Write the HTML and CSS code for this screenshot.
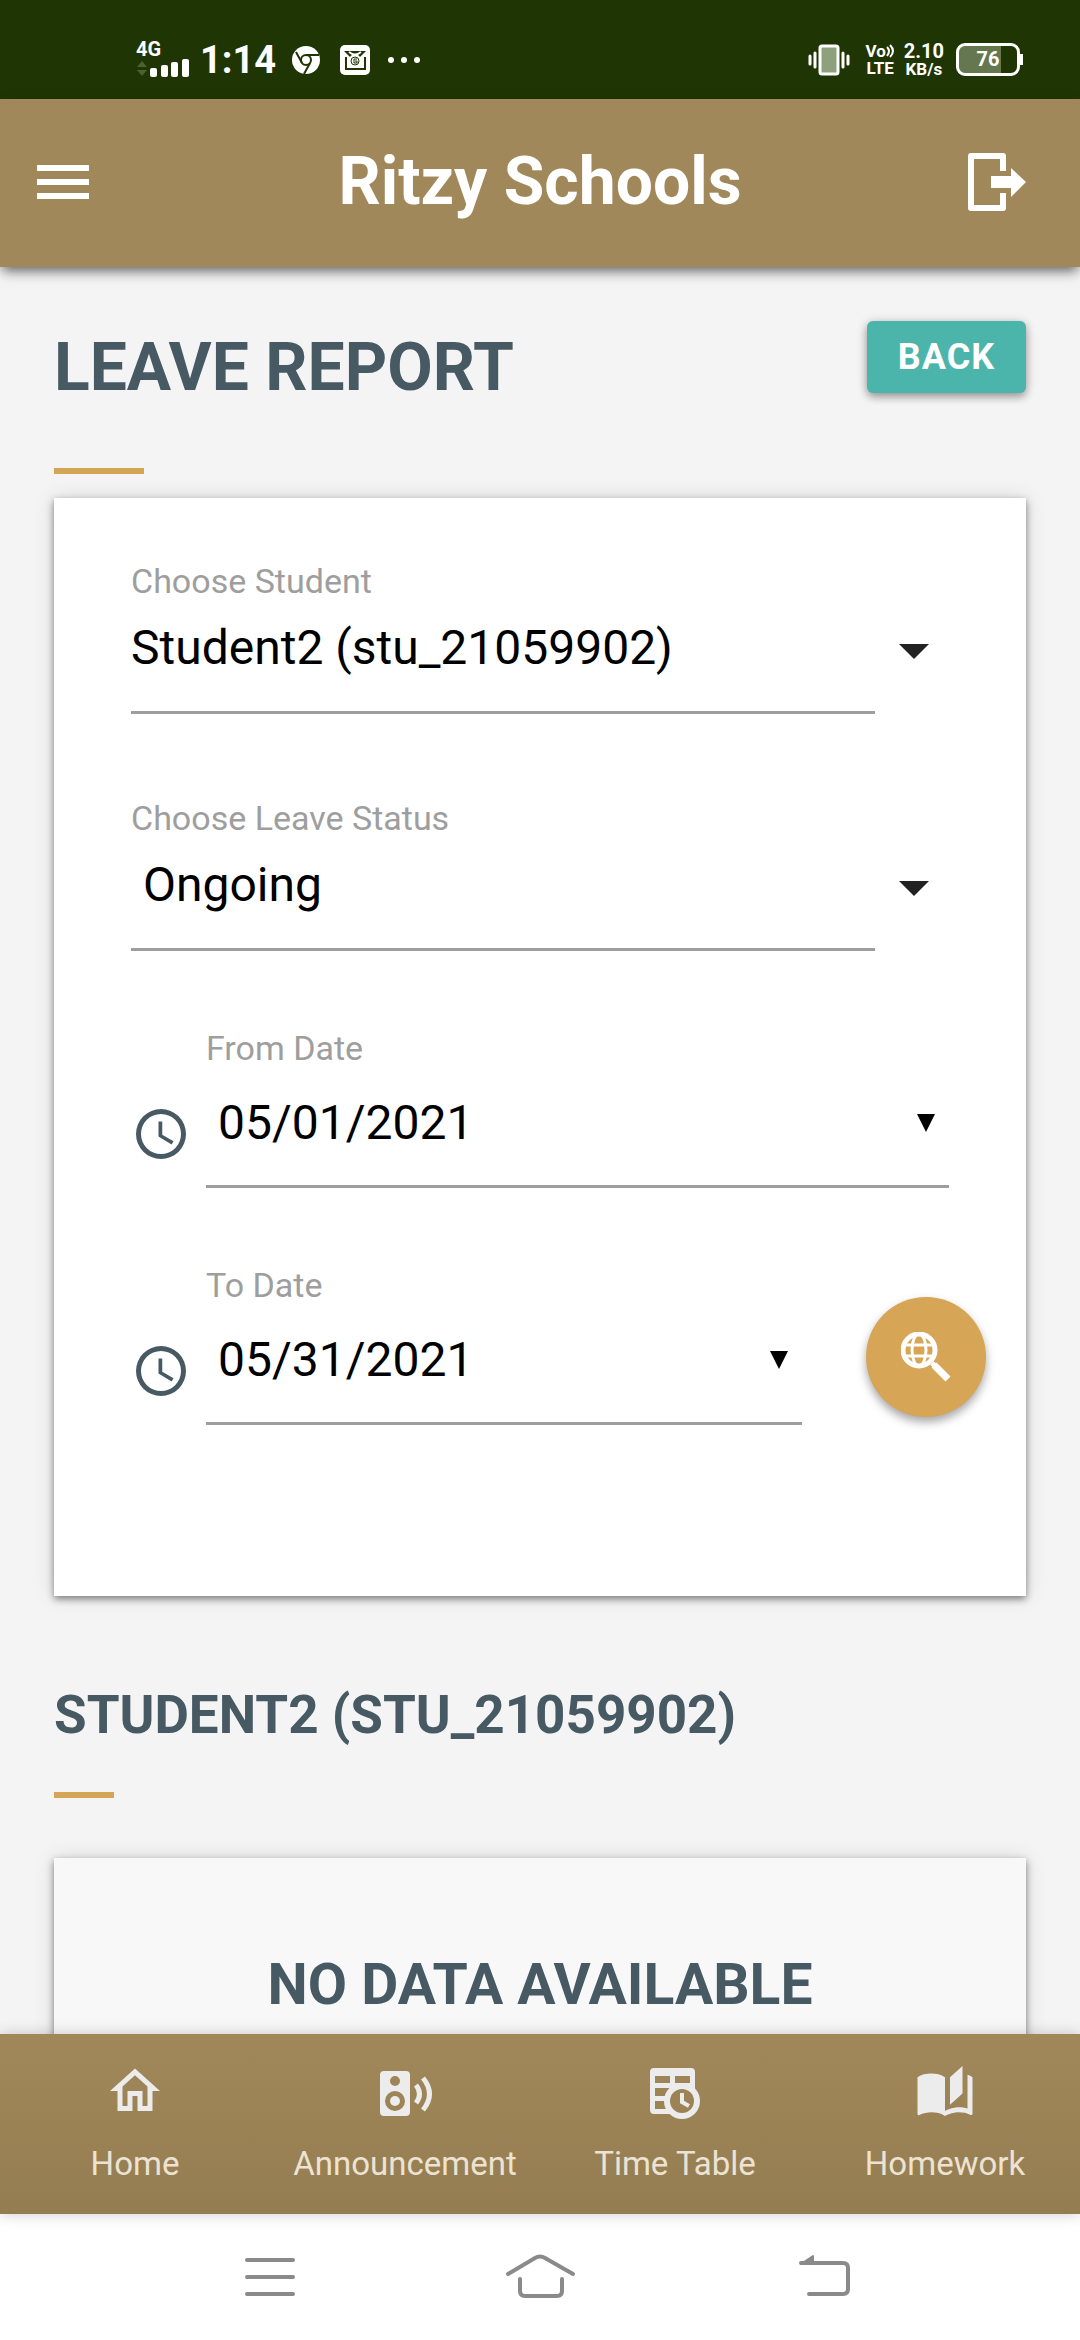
FILE: index.html
```html
<!DOCTYPE html>
<html lang="en">

<head>
    <meta charset="utf-8">
    <meta name="viewport" content="width=device-width">
    <title>Ritzy Schools</title>
    <link rel="stylesheet" href="styles.css">
</head>

<body>
    <div class="statusBar">
        <div class="statusLeft">
            <div class="signal">
                <span class="netType">4G</span>
                <svg width="54" height="22" viewBox="0 0 54 22">
                    <path d="M1 9L6 3l5 6zM1 12h10l-5 6z" fill="#4a6332" />
                    <g fill="#fff">
                        <rect x="14" y="10" width="7" height="9" rx="2" />
                        <rect x="25" y="7" width="7" height="12" rx="2" />
                        <rect x="35" y="4" width="7" height="15" rx="2" />
                        <rect x="46" y="1" width="7" height="18" rx="2" />
                    </g>
                </svg>
            </div>
            <span class="time">1:14</span>
            <svg class="chrome" width="28" height="28" viewBox="0 0 28 28">
                <circle cx="14" cy="14" r="14" fill="#fff" />
                <g fill="none" stroke="#1f3604" stroke-width="2">
                    <circle cx="14" cy="14" r="5" />
                    <path d="M14 9h13M10 17L4 6M18 17l-6 11" />
                </g>
            </svg>
            <svg class="mail" width="30" height="30" viewBox="0 0 30 30">
                <rect width="30" height="30" rx="5" fill="#fff" />
                <path d="M4 6h22l-6 6a6 6 0 0 0-10 0z" fill="#1f3604" />
                <path d="M9 7q6 5 12 0" fill="none" stroke="#fff" stroke-width="2" />
                <path d="M6 12v12h19V12" fill="none" stroke="#1f3604" stroke-width="2" />
                <circle cx="15" cy="16" r="4" fill="none" stroke="#1f3604" stroke-width="1" />
                <path d="M17 14h-3v4h3v-2h-2" fill="none" stroke="#1f3604" stroke-width="1" />
            </svg>
            <svg width="34" height="8" viewBox="0 0 34 8" fill="#fff">
                <circle cx="4" cy="4" r="3" />
                <circle cx="17" cy="4" r="3" />
                <circle cx="30" cy="4" r="3" />
            </svg>
        </div>
        <div class="statusRight">
            <svg width="42" height="32" viewBox="0 0 42 32">
                <rect x="12" y="2" width="18" height="28" rx="2" fill="#8fa07c" stroke="#fff" stroke-width="3" />
                <path d="M7 9v14M35 9v14M2 12v8M40 12v8" stroke="#fff" stroke-width="3" stroke-linecap="round" />
            </svg>
            <div class="twoLine volte">
                <span class="vo">Vo<svg width="9" height="14" viewBox="0 0 9 14">
                        <path d="M1 3q4 4 0 9M4 1q6 6 0 12" fill="none" stroke="#fff" stroke-width="2" />
                    </svg></span>
                <span>LTE</span>
            </div>
            <div class="twoLine speed">
                <span class="num">2.10</span>
                <span>KB/s</span>
            </div>
            <div class="battery"><span class="batteryText">76</span></div>
        </div>
    </div>

    <header class="topBar">
        <button class="iconBtn menuBtn" aria-label="Menu">
            <svg width="52" height="34" viewBox="0 0 52 34" fill="#fff">
                <path d="M0 0h52v6H0zM0 14h52v6H0zM0 28h52v6H0z" />
            </svg>
        </button>
        <div class="brand">Ritzy Schools</div>
        <button class="iconBtn logoutBtn" aria-label="Logout">
            <svg width="58" height="58" viewBox="0 0 58 58">
                <path d="M35 18V3H3v52h32V40" fill="none" stroke="#fff" stroke-width="6" stroke-linejoin="round" />
                <path d="M23 23h20v-8l15 14-15 15v-9H23z" fill="#fff" />
            </svg>
        </button>
    </header>

    <main>
        <div class="titleRow">
            <h1>Leave Report</h1>
            <button class="back">BACK</button>
        </div>
        <div class="bar"></div>

        <form class="card filters">
            <div class="field">
                <label for="student">Choose Student</label>
                <div class="selectRow">
                    <select id="student">
                        <option>Student2 (stu_21059902)</option>
                    </select>
                    <svg width="30" height="15" viewBox="0 0 30 15"><path d="M0 0h30L15 15z" fill="#222" /></svg>
                </div>
            </div>
            <div class="field">
                <label for="status">Choose Leave Status</label>
                <div class="selectRow">
                    <select id="status" class="indent">
                        <option>Ongoing</option>
                    </select>
                    <svg width="30" height="15" viewBox="0 0 30 15"><path d="M0 0h30L15 15z" fill="#222" /></svg>
                </div>
            </div>
            <div class="dateRow">
                <svg class="clock" width="60" height="60" viewBox="0 0 24 24">
                    <path d="M12 2a10 10 0 1 0 0 20 10 10 0 0 0 0-20zm0 18a8 8 0 1 1 0-16 8 8 0 0 1 0 16zM12.500 7H11v6l5.250 3.150.75-1.230-4.500-2.670z" />
                </svg>
                <div class="dateField">
                    <label for="from">From Date</label>
                    <div class="dateBox">
                        <input type="text" id="from" value="05/01/2021">
                        <svg width="18" height="18" viewBox="0 0 18 18"><path d="M0 0h18L9 18z" /></svg>
                    </div>
                </div>
            </div>
            <div class="dateRow">
                <svg class="clock" width="60" height="60" viewBox="0 0 24 24">
                    <path d="M12 2a10 10 0 1 0 0 20 10 10 0 0 0 0-20zm0 18a8 8 0 1 1 0-16 8 8 0 0 1 0 16zM12.500 7H11v6l5.250 3.150.75-1.230-4.500-2.670z" />
                </svg>
                <div class="dateField">
                    <label for="to">To Date</label>
                    <div class="dateBox">
                        <input type="text" id="to" value="05/31/2021">
                        <svg width="18" height="18" viewBox="0 0 18 18"><path d="M0 0h18L9 18z" /></svg>
                    </div>
                </div>
                <button type="button" class="search" aria-label="Search">
                    <svg width="50" height="50" viewBox="0 0 50 50" fill="none" stroke="#fff">
                        <circle cx="18" cy="18" r="16" stroke-width="5" />
                        <ellipse cx="18" cy="18" rx="7" ry="16" stroke-width="3" />
                        <path d="M3 13h30M3 24h30" stroke-width="3" />
                        <path d="M31 31l3 3" stroke-width="5" />
                        <path d="M33 33l14 14" stroke-width="7" />
                    </svg>
                </button>
            </div>
        </form>

        <h2>Student2 (stu_21059902)</h2>
        <div class="bar short"></div>
        <div class="card empty">
            <h3>No Data Available</h3>
        </div>
    </main>

    <nav class="tabs">
        <a href="#home">
            <svg width="60" height="60" viewBox="0 0 24 24">
                <path d="M12 5.690L17 10.190V18h-2v-6H9v6H7v-7.810zM12 3L2 12h3v8h6v-6h2v6h6v-8h3z" />
            </svg>
            Home
        </a>
        <a href="#announcement">
            <svg width="60" height="60" viewBox="0 0 60 60">
                <path fill-rule="evenodd" d="M9 10h22a4 4 0 0 1 4 4v37a4 4 0 0 1-4 4H9a4 4 0 0 1-4-4V14a4 4 0 0 1 4-4zM20 15a5 5 0 1 0 0 10 5 5 0 0 0 0-10zM20 30a10 10 0 1 0 0 20 10 10 0 0 0 0-20z" />
                <circle cx="20" cy="40" r="5" />
                <path d="M41 24q7 9 0 18M48 17q13 16 0 32" fill="none" stroke="#ececec" stroke-width="5" />
            </svg>
            Announcement
        </a>
        <a href="#timetable">
            <svg width="60" height="60" viewBox="0 0 60 60">
                <path fill-rule="evenodd" d="M9 7h37a4 4 0 0 1 4 4v29L37 53H9a4 4 0 0 1-4-4V11a4 4 0 0 1 4-4zM10 15v7h15v-7zM30 15v7h15v-7zM10 27v8h15v-8zM10 40v8h15v-8z" />
                <circle cx="37" cy="40" r="18" />
                <circle cx="37" cy="40" r="12" fill="#9b8356" />
                <path d="M37 32v9l7 4" fill="none" stroke="#ececec" stroke-width="4" />
            </svg>
            Time Table
        </a>
        <a href="#homework">
            <svg width="60" height="60" viewBox="0 0 24 24">
                <path d="M19 2l-5 4.500v11l5-4.500zM6.500 5C4.550 5 2.450 5.400 1 6.500v14.660c0 .250.250.500.500.500.100 0 .150-.070.250-.070 1.350-.650 3.300-1.090 4.750-1.090 1.950 0 4.050.400 5.500 1.500 1.350-.850 3.800-1.500 5.500-1.500 1.650 0 3.350.310 4.750 1.060.100.050.150.030.250.030.250 0 .500-.250.500-.500V6.500c-.600-.450-1.250-.750-2-1V19c-1.100-.350-2.300-.500-3.500-.500-1.700 0-4.150.650-5.500 1.500V6.500C10.550 5.400 8.450 5 6.500 5z" />
            </svg>
            Homework
        </a>
    </nav>

    <div class="systemNav">
        <button class="iconBtn" aria-label="Recent apps">
            <svg width="100" height="50" viewBox="0 0 100 50"><path d="M31 8h46M31 25h46M31 42h46" /></svg>
        </button>
        <button class="iconBtn" aria-label="Home screen">
            <svg width="100" height="50" viewBox="0 0 100 50"><path d="M18 22L45 6q5-3 10 0l28 16M30 27v12q0 5 5 5h32q5 0 5-5V27" /></svg>
        </button>
        <button class="iconBtn" aria-label="Go back">
            <svg width="100" height="50" viewBox="0 0 100 50">
                <path d="M37 11h42q5 0 5 5v21q0 5-5 5H45" />
                <path class="solid" d="M37 12l12-8v8z" />
            </svg>
        </button>
    </div>
</body>

</html>
```
FILE: styles.css
```css
* {
    box-sizing: border-box;
}

body {
    margin: 0;
    height: 100vh;
    display: flex;
    flex-direction: column;
    background-color: #f4f4f4;
    font-family: Roboto, "Liberation Sans", sans-serif;
}

svg {
    display: block;
    flex: none;
}

button {
    border: 0;
    padding: 0;
    font-family: inherit;
    cursor: pointer;
}

h1, h2, h3 {
    margin: 0;
    color: #475a64;
    text-transform: uppercase;
}

/* Phone status bar */

.statusBar {
    flex: none;
    height: 99px;
    padding: 20px 60px 0 136px;
    display: flex;
    justify-content: space-between;
    align-items: center;
    background-color: #1f3604;
    color: #fff;
    font-weight: bold;
}

.statusLeft, .statusRight {
    display: flex;
    align-items: center;
}

.signal {
    width: 54px;
    margin-right: 10px;
}

.netType {
    display: block;
    font-size: 20px;
    line-height: 18px;
}

.time {
    font-size: 38px;
    line-height: 40px;
    margin-right: 16px;
}

.chrome {
    margin-right: 20px;
}

.mail {
    margin-right: 17px;
}

.twoLine {
    display: flex;
    flex-direction: column;
    align-items: center;
    font-size: 17px;
    line-height: 17px;
}

.volte {
    margin: 0 9px 0 15px;
}

.vo {
    display: flex;
    align-items: center;
}

.num {
    font-size: 20px;
    line-height: 20px;
}

.battery {
    width: 64px;
    height: 33px;
    margin-left: 12px;
    padding: 1px;
    border: 3px solid #fff;
    border-radius: 9px;
    background: linear-gradient(to right, #65774e 72%, #1f3604 72%);
    position: relative;
}

.battery::after {
    content: "";
    position: absolute;
    right: -6px;
    top: 8px;
    width: 3px;
    height: 11px;
    background-color: #fff;
}

.batteryText {
    display: block;
    font-size: 20px;
    line-height: 24px;
    text-align: center;
}

/* App bar */

.topBar {
    flex: none;
    height: 168px;
    padding-bottom: 3px;
    display: grid;
    grid-template-columns: 160px 1fr 160px;
    align-items: center;
    background-color: #a0885a;
    box-shadow: 0 6px 12px -2px rgba(0, 0, 0, 0.6);
    position: relative;
}

.iconBtn {
    display: flex;
    align-items: center;
    background: none;
}

.menuBtn {
    padding-left: 37px;
}

.logoutBtn {
    justify-content: flex-end;
    padding-right: 54px;
}

.brand {
    color: #fff;
    font-size: 66px;
    font-weight: bold;
    text-align: center;
}

/* Page */

main {
    flex: 1;
    min-height: 0;
    overflow-y: auto;
    scrollbar-width: none;
    padding: 54px 54px 0;
}

.titleRow {
    display: flex;
    justify-content: space-between;
    align-items: flex-start;
}

h1 {
    font-size: 66px;
    line-height: 93px;
}

.back {
    width: 159px;
    height: 72px;
    border-radius: 6px;
    background-color: #4cb5ab;
    color: #fff;
    font-size: 36px;
    font-weight: bold;
    letter-spacing: 1px;
    box-shadow: 0 4px 8px rgba(0, 0, 0, 0.35), 0 0 12px rgba(0, 0, 0, 0.1);
}

.bar {
    width: 90px;
    height: 6px;
    margin: 54px 0 24px;
    background-color: #d4a554;
}

.card {
    background-color: #fff;
    box-shadow: 0 3px 7px rgba(0, 0, 0, 0.45), 0 0 20px rgba(0, 0, 0, 0.12);
}

.filters {
    padding: 63px 77px 171px;
}

label {
    display: block;
    color: #9e9e9e;
    font-size: 34px;
    line-height: 40px;
}

.field {
    margin-bottom: 84px;
}

.field + .dateRow {
    margin-top: -7px;
}

.selectRow {
    display: flex;
    align-items: center;
    padding-right: 20px;
    gap: 24px;
}

.selectRow svg {
    margin-bottom: 13px;
}

select, input {
    flex: 1;
    min-width: 0;
    border: 0;
    border-radius: 0;
    outline: 0;
    background: none;
    color: #000;
    font-family: inherit;
    font-size: 48px;
}

select {
    appearance: none;
    height: 113px;
    padding: 0 0 18px;
    border-bottom: 3px solid #9e9e9e;
}

.indent {
    padding-left: 12px;
}

.dateRow {
    display: flex;
    align-items: flex-end;
    margin-top: 77px;
}

.clock {
    margin: 0 15px 24px 0;
    fill: #475a64;
}

.dateField {
    flex: 1;
    min-width: 0;
}

.dateBox {
    display: flex;
    align-items: center;
    height: 120px;
    padding: 0 14px 8px 12px;
    border-bottom: 3px solid #9e9e9e;
}

input {
    height: 100%;
    padding: 0;
}

.search {
    width: 120px;
    height: 120px;
    margin: 0 -37px 8px 64px;
    display: flex;
    align-items: center;
    justify-content: center;
    border-radius: 50%;
    background-color: #d6a555;
    box-shadow: 0 5px 10px rgba(0, 0, 0, 0.35);
}

h2 {
    margin-top: 89px;
    font-size: 53px;
    line-height: 60px;
}

.short {
    width: 60px;
    margin: 47px 0 60px;
}

.empty {
    padding: 97px 0;
    background-color: #f8f8f8;
    text-align: center;
}

h3 {
    font-size: 57px;
    line-height: 60px;
}

/* Bottom tabs */

.tabs {
    flex: none;
    display: flex;
    height: 180px;
    padding-top: 27px;
    background: linear-gradient(#a1885a, #947d51);
    box-shadow: 0 0 14px rgba(0, 0, 0, 0.2);
    position: relative;
}

.tabs a {
    flex: 1 1 0;
    display: flex;
    flex-direction: column;
    align-items: center;
    gap: 23px;
    color: #ece3d3;
    font-size: 33px;
    line-height: 40px;
    text-decoration: none;
}

.tabs svg {
    fill: #ececec;
}

.systemNav {
    flex: none;
    display: flex;
    height: 126px;
    padding: 0 12%;
    background-color: #fff;
}

.systemNav button {
    flex: 1;
    justify-content: center;
}

.systemNav path {
    fill: none;
    stroke: #8a8a8a;
    stroke-width: 4;
    stroke-linecap: round;
}

.systemNav .solid {
    fill: #8a8a8a;
    stroke-width: 2;
    stroke-linejoin: round;
}
```
